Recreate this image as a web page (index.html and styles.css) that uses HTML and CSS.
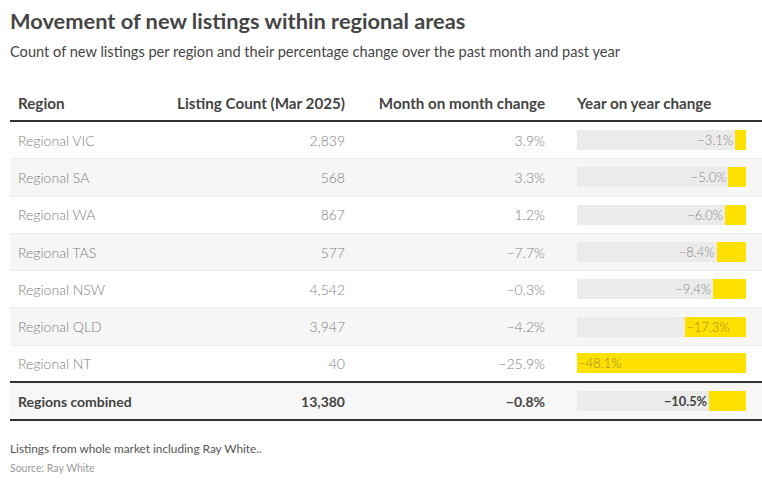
FILE: index.html
```html
<!DOCTYPE html>
<html>
<head>
<meta charset="utf-8">
<link rel="stylesheet" href="styles.css">
</head>
<body>
<div class="page">
  <h1 class="title">Movement of new listings within regional areas</h1>
  <p class="subtitle">Count of new listings per region and their percentage change over the past month and past year</p>

  <div class="table">
    <div class="row head">
      <div class="cell">Region</div>
      <div class="cell num">Listing Count (Mar 2025)</div>
      <div class="cell num">Month on month change</div>
      <div class="cell bar-col">Year on year change</div>
    </div>

    <div class="row">
      <div class="cell">Regional VIC</div>
      <div class="cell num">2,839</div>
      <div class="cell num">3.9%</div>
      <div class="cell bar-col"><div class="track"><span class="lbl">&minus;3.1%</span><div class="fill" style="width:6.445%"></div></div></div>
    </div>
    <div class="row alt">
      <div class="cell">Regional SA</div>
      <div class="cell num">568</div>
      <div class="cell num">3.3%</div>
      <div class="cell bar-col"><div class="track"><span class="lbl">&minus;5.0%</span><div class="fill" style="width:10.395%"></div></div></div>
    </div>
    <div class="row">
      <div class="cell">Regional WA</div>
      <div class="cell num">867</div>
      <div class="cell num">1.2%</div>
      <div class="cell bar-col"><div class="track"><span class="lbl">&minus;6.0%</span><div class="fill" style="width:12.474%"></div></div></div>
    </div>
    <div class="row alt">
      <div class="cell">Regional TAS</div>
      <div class="cell num">577</div>
      <div class="cell num">&minus;7.7%</div>
      <div class="cell bar-col"><div class="track"><span class="lbl">&minus;8.4%</span><div class="fill" style="width:17.464%"></div></div></div>
    </div>
    <div class="row">
      <div class="cell">Regional NSW</div>
      <div class="cell num">4,542</div>
      <div class="cell num">&minus;0.3%</div>
      <div class="cell bar-col"><div class="track"><span class="lbl">&minus;9.4%</span><div class="fill" style="width:19.543%"></div></div></div>
    </div>
    <div class="row alt">
      <div class="cell">Regional QLD</div>
      <div class="cell num">3,947</div>
      <div class="cell num">&minus;4.2%</div>
      <div class="cell bar-col"><div class="track"><div class="fill" style="width:35.967%"><span class="lbl in">&minus;17.3%</span></div></div></div>
    </div>
    <div class="row last">
      <div class="cell">Regional NT</div>
      <div class="cell num">40</div>
      <div class="cell num">&minus;25.9%</div>
      <div class="cell bar-col"><div class="track"><div class="fill" style="width:100%"><span class="lbl in">&minus;48.1%</span></div></div></div>
    </div>

    <div class="row total">
      <div class="cell">Regions combined</div>
      <div class="cell num">13,380</div>
      <div class="cell num">&minus;0.8%</div>
      <div class="cell bar-col"><div class="track"><span class="lbl">&minus;10.5%</span><div class="fill" style="width:21.830%"></div></div></div>
    </div>
  </div>

  <p class="note">Listings from whole market including Ray White..</p>
  <p class="source">Source: Ray White</p>
</div>
</body>
</html>
```

FILE: styles.css
```css
* { box-sizing: border-box; }

html, body {
  margin: 0;
  padding: 0;
  background: #ffffff;
}

body {
  font-family: Lato, "Open Sans", "Liberation Sans", sans-serif;
  color: #444444;
}

.page {
  width: 762px;
  padding: 7px 0 0 10px;
}

.title {
  margin: 0;
  font-size: 21.8px;
  line-height: 28px;
  font-weight: 700;
  color: #454545;
}

.subtitle {
  margin: 7px 0 0;
  font-size: 14.6px;
  line-height: 20px;
  font-weight: 400;
  color: #454545;
}

.table {
  margin-top: 22px;
  width: 752px;
}

.row {
  display: grid;
  grid-template-columns: 150px 193px 200px 209px;
  height: 37.3px;
  align-items: center;
  border-bottom: 1px solid #ececec;
  font-size: 14px;
  font-weight: 300;
  color: #808080;
}

.row.alt {
  background: #f6f6f6;
}

.cell {
  padding: 0 8px;
  white-space: nowrap;
}

.cell.num {
  text-align: right;
}

.cell.bar-col {
  padding: 0 16px 0 24px;
}

.row.head {
  height: 38px;
  align-items: end;
  padding-bottom: 8px;
  border-bottom: 2px solid #333333;
  font-size: 15.2px;
  font-weight: 700;
  color: #444444;
  line-height: 18px;
}

.row.last {
  border-bottom: 2px solid #333333;
}

.row.total {
  height: 38px;
  background: #f7f7f7;
  border-bottom: 2px solid #333333;
  font-weight: 700;
  color: #444444;
}

.track {
  display: flex;
  justify-content: flex-end;
  align-items: center;
  height: 20px;
  background: #ebebeb;
}

.fill {
  height: 20px;
  background: #ffe100;
  display: flex;
  align-items: center;
}

.lbl {
  font-size: 13px;
  line-height: 20px;
  font-weight: 300;
  color: #888888;
  padding-right: 2px;
}

.lbl.in {
  padding: 0 0 0 1px;
  color: #9a8a36;
}

.total .lbl {
  font-size: 12.8px;
  font-weight: 700;
  color: #444444;
}

.note {
  margin: 20px 0 0;
  font-size: 11.8px;
  line-height: 16px;
  color: #555555;
}

.source {
  margin: 3px 0 0;
  font-size: 10.5px;
  line-height: 16px;
  color: #999999;
}
```
